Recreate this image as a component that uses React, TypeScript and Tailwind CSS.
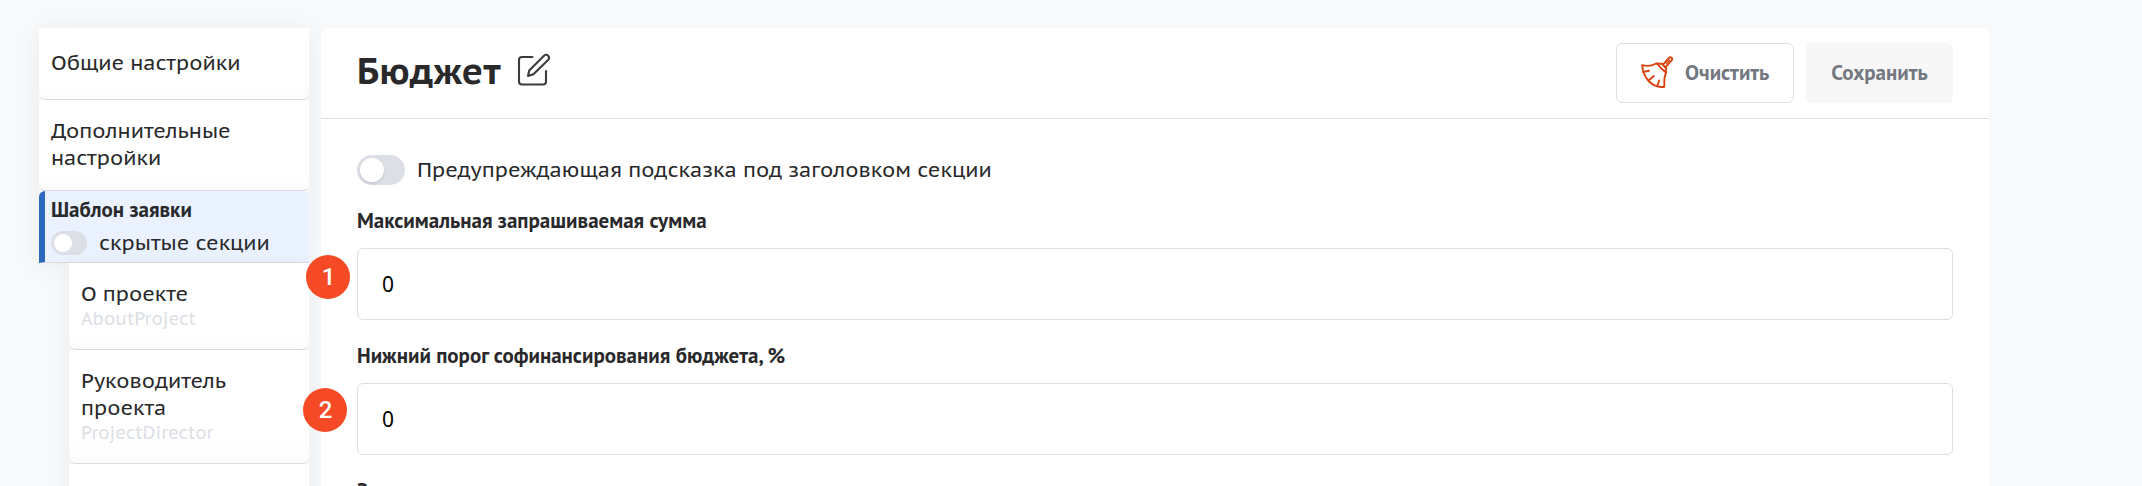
import React from 'react';

function SideItem({ title, code, className }: { title: string; code?: string; className: string }) {
  return (
    <div
      className={`flex shrink-0 flex-col justify-center rounded-b-[6px] border-b border-[#d8dae0] bg-white bg-linear-to-b from-white from-80% to-[#fbfbfb] px-3 pb-[2px] text-[21px] leading-[27px] ${className}`}
    >
      <span className="whitespace-pre-line">{title}</span>
      {code && <span className="text-[18px] leading-[23px] text-[#dcdfe6]">{code}</span>}
    </div>
  );
}

function BroomIcon() {
  return (
    <svg className="mb-[2px] h-8 w-8 shrink-0" viewBox="0 0 32 32" fill="none" stroke="#d9420f" strokeWidth="1.9" strokeLinecap="round" strokeLinejoin="round">
      <path d="M1.2 9.2C7 10.6 11.5 9.6 14.5 7.8C16.5 6.7 18.5 8.2 20.8 7.7L25.3 12.5C24.2 14.3 25.6 15.8 24.8 17.5C22.6 21.5 23.7 26 23.2 31C11 32 2 22 1.2 9.2Z" />
      <path d="M16 7.5C18.5 10.8 21.7 14.2 25.2 16.6" />
      <path d="M22 8.6L27.9 2C29.8 .1 32.3 2.4 30.5 4.4L24.6 11.2" />
      <path d="M28.4 4.2L25.5 7.4" strokeWidth="1.3" />
      <path d="M2.2 16L8 14.8M7.7 24.5L12.8 20M16.7 29L18.2 24.5" />
    </svg>
  );
}

function EditIcon() {
  return (
    <svg className="mb-[6px] h-[34px] w-[34px]" viewBox="0 0 34 34" fill="none" stroke="#3c3c3e" strokeWidth="2.1" strokeLinecap="round" strokeLinejoin="round">
      <path d="M15.5 4H5C3 4 2 5 2 7V28.5C2 30.5 3 31.5 5 31.5H26C28 31.5 29 30.5 29 28.5V18" />
      <path d="M11 23L12.2 17.5L27 2.7C30 .2 33.5 3.8 31.3 6.7L16.4 21.2L11 23Z" />
    </svg>
  );
}

function Field({ label }: { label: string }) {
  return (
    <label className="mb-[19px] block">
      <span className="block h-[44px] pt-[2px] font-['PT_Sans','Noto_Sans',sans-serif] text-[21px] leading-[30px] font-bold">{label}</span>
      <input
        readOnly
        value="0"
        className="block h-[72px] w-full rounded-[6px] border border-[#dcdfe6] bg-white px-6 font-['Noto_Sans',sans-serif] text-[21px] text-black outline-none"
      />
    </label>
  );
}

function Badge({ value, className }: { value: string; className: string }) {
  return (
    <span className={`absolute flex h-11 w-11 items-center justify-center rounded-full bg-[#f64a26] pb-[1px] pl-[1px] font-['Roboto',sans-serif] text-[24px] leading-none font-medium text-white ${className}`}>
      {value}
    </span>
  );
}

export default function App() {
  return (
    <div className="relative flex h-[486px] w-[2142px] gap-3 overflow-hidden bg-[#f8f9fb] pt-7 pl-[39px] font-['PT_Sans_Caption','Noto_Sans',sans-serif] text-[#29292b]">
      <aside className="flex w-[270px] shrink-0 flex-col">
        <div className="shadow-[0_3px_24px_rgba(0,0,0,0.06)]">
          <SideItem title="Общие настройки" className="h-[72px]" />
          <SideItem title={'Дополнительные\nнастройки'} className="h-[91px]" />
          <div className="h-[72px] overflow-hidden rounded-t-[6px] border-b border-l-[6px] border-b-[#d8dae0] border-l-[#2a69bd] bg-[#eaf2ff] pl-[6px]">
            <div className="pt-[5px] font-['PT_Sans','Noto_Sans',sans-serif] text-[21px] leading-[27px] font-bold">Шаблон заявки</div>
            <div className="mt-[6px] flex items-center gap-3">
              <span className="flex h-6 w-9 items-center rounded-full bg-[#dcdfe6] px-[3px]">
                <span className="h-[18px] w-[18px] rounded-full bg-white" />
              </span>
              <span className="text-[21px] leading-[27px]">скрытые секции</span>
            </div>
          </div>
        </div>
        <div className="ml-[30px] shadow-[0_6px_24px_rgba(0,0,0,0.06)]">
          <SideItem title="О проекте" code="AboutProject" className="h-[87px]" />
          <SideItem title={'Руководитель\nпроекта'} code="ProjectDirector" className="h-[114px]" />
          <SideItem title="" className="h-[87px]" />
        </div>
      </aside>

      <main className="z-10 h-[600px] w-[1668px] shrink-0 rounded-[6px] bg-white">
        <header className="flex h-[91px] items-center justify-between border-b border-[#dcdfe6] px-9">
          <div className="flex items-center gap-4">
            <h1 className="pb-[4px] text-[36px] leading-[44px] font-bold">Бюджет</h1>
            <EditIcon />
          </div>
          <div className="flex gap-3 font-['PT_Sans','Noto_Sans',sans-serif] text-[21px] font-bold text-[#727781]">
            <button className="flex h-[60px] w-[178px] items-center gap-3 rounded-[6px] border border-[#dcdfe6] pl-6">
              <BroomIcon />
              Очистить
            </button>
            <button className="h-[60px] w-[147px] rounded-[6px] bg-[#f7f7f7]">Сохранить</button>
          </div>
        </header>
        <div className="px-9 pt-9">
          <div className="mb-[19px] flex items-center gap-3">
            <span className="flex h-[30px] w-12 items-center rounded-full bg-[#dcdfe6] px-[3px]">
              <span className="h-6 w-6 rounded-full bg-white shadow-[0_2px_3px_rgba(0,0,0,0.1)]" />
            </span>
            <span className="text-[21px] leading-[30px]">Предупреждающая подсказка под заголовком секции</span>
          </div>
          <Field label="Максимальная запрашиваемая сумма" />
          <Field label="Нижний порог софинансирования бюджета, %" />
          <Field label="Запрашиваемая сумма" />
        </div>
      </main>

      <Badge value="1" className="top-[255px] left-[306px] z-20" />
      <Badge value="2" className="top-[388px] left-[303px] z-20" />
    </div>
  );
}
